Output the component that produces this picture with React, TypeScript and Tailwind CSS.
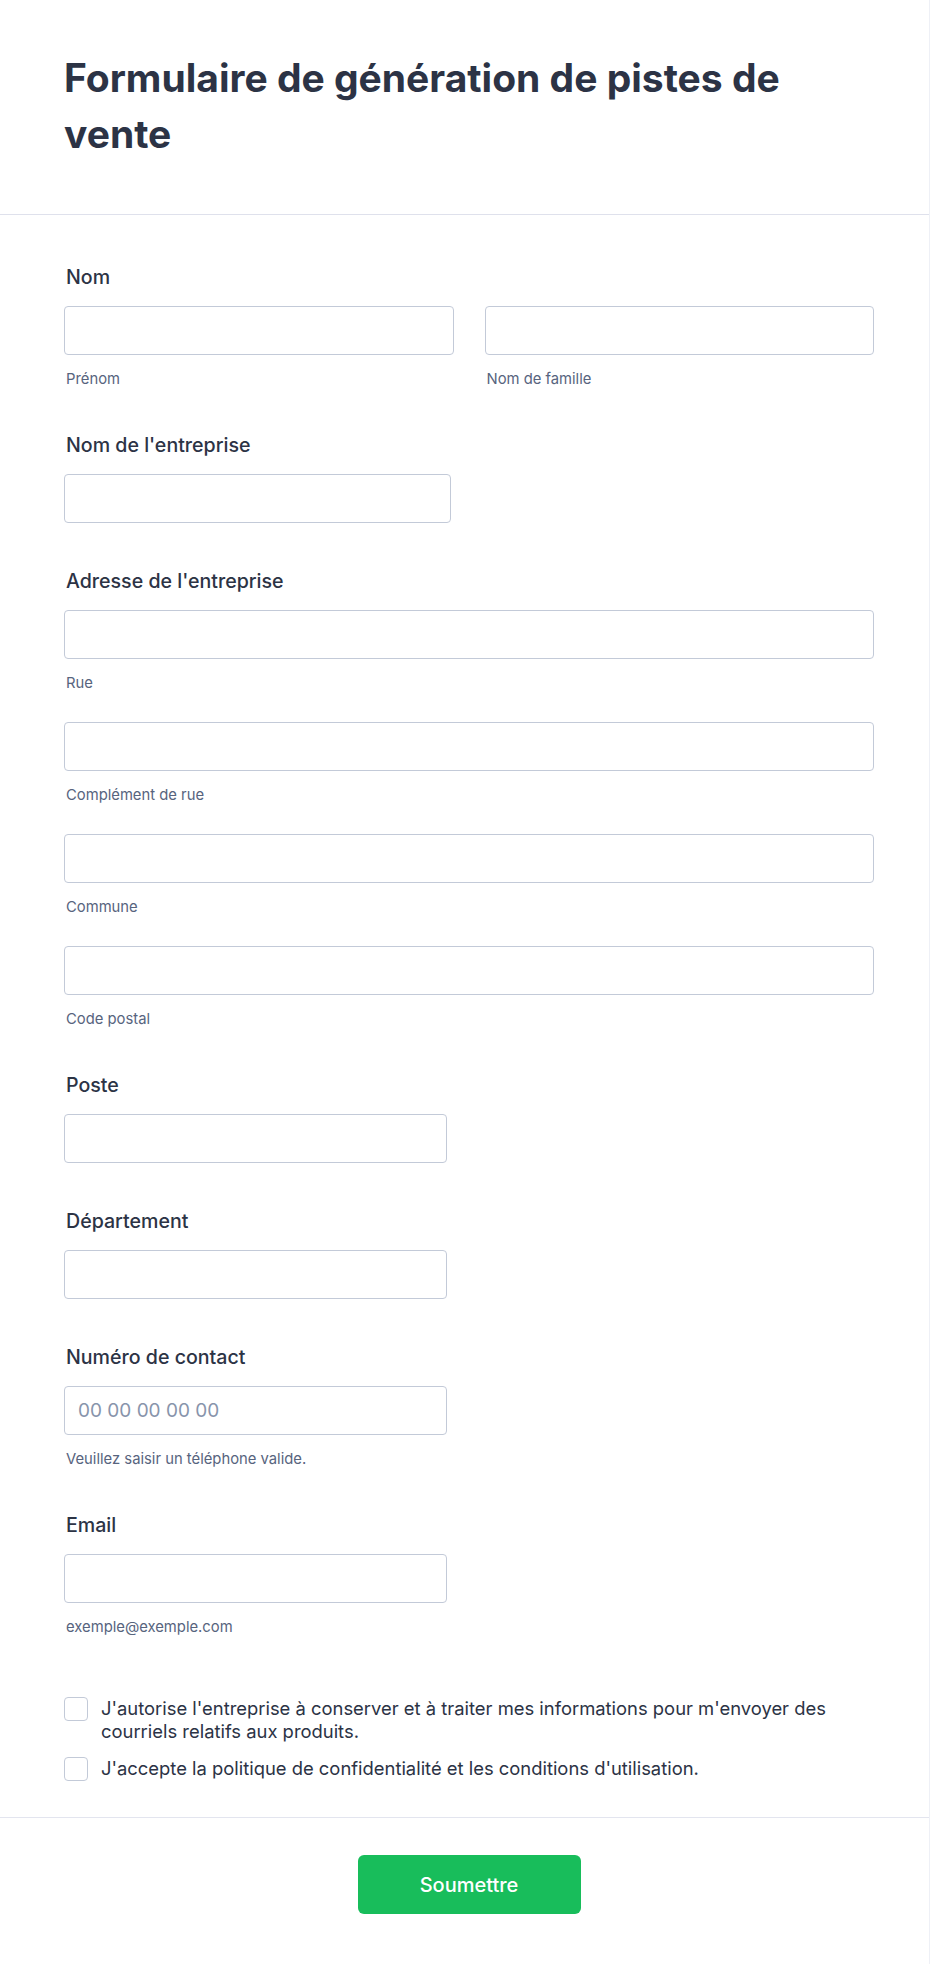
import React from "react";

const inputCls =
  "block h-[49px] w-full rounded-[4px] border border-[#c3cad8] bg-white px-[13px] text-[19px] text-[#2c3345] outline-none placeholder:text-[#8894ab]";

function Label({ children }: { children: React.ReactNode }) {
  return (
    <div className="pl-[2px] text-[19.6px] font-medium leading-[27px] text-[#2c3345]">
      {children}
    </div>
  );
}

function Sub({ children }: { children: React.ReactNode }) {
  return (
    <div className="mt-[14px] pl-[2px] text-[14.8px] leading-[20px] text-[#57647e]">
      {children}
    </div>
  );
}

function Checkbox() {
  return (
    <span className="block h-[24px] w-[24px] shrink-0 rounded-[4px] border border-[#c3cad8] bg-white" />
  );
}

export default function App() {
  return (
    <div className="min-h-screen border-r border-[#eef0f6] bg-white [font-family:Inter,'Noto_Sans',sans-serif] text-[#2c3345]">
      <header className="border-b border-[#dfe1ec] pb-[52px] pl-[64px] pr-[55px] pt-[50px]">
        <h1 className="text-[39px] font-bold leading-[56px] text-[#2c3345]">
          Formulaire de génération de pistes de vente
        </h1>
      </header>

      <main className="pl-[64px] pr-[55px] pt-[49px]">
        {/* Nom */}
        <section>
          <Label>Nom</Label>
          <div className="mt-[15px] flex gap-[31px]">
            <div className="w-[390px]">
              <input className={inputCls} />
              <Sub>Prénom</Sub>
            </div>
            <div className="w-[390px]">
              <input className={inputCls} />
              <Sub>Nom de famille</Sub>
            </div>
          </div>
        </section>

        {/* Entreprise */}
        <section className="mt-[43px]">
          <Label>Nom de l'entreprise</Label>
          <div className="mt-[15px] w-[387px]">
            <input className={inputCls} />
          </div>
        </section>

        {/* Adresse */}
        <section className="mt-[45px]">
          <Label>Adresse de l'entreprise</Label>
          <div className="mt-[15px]">
            <input className={inputCls} />
            <Sub>Rue</Sub>
          </div>
          <div className="mt-[29px]">
            <input className={inputCls} />
            <Sub>Complément de rue</Sub>
          </div>
          <div className="mt-[29px]">
            <input className={inputCls} />
            <Sub>Commune</Sub>
          </div>
          <div className="mt-[29px]">
            <input className={inputCls} />
            <Sub>Code postal</Sub>
          </div>
        </section>

        {/* Poste */}
        <section className="mt-[43px]">
          <Label>Poste</Label>
          <div className="mt-[15px] w-[383px]">
            <input className={inputCls} />
          </div>
        </section>

        {/* Département */}
        <section className="mt-[45px]">
          <Label>Département</Label>
          <div className="mt-[15px] w-[383px]">
            <input className={inputCls} />
          </div>
        </section>

        {/* Numéro */}
        <section className="mt-[45px]">
          <Label>Numéro de contact</Label>
          <div className="mt-[15px] w-[383px]">
            <input className={inputCls} placeholder="00 00 00 00 00" />
            <Sub>Veuillez saisir un téléphone valide.</Sub>
          </div>
        </section>

        {/* Email */}
        <section className="mt-[43px]">
          <Label>Email</Label>
          <div className="mt-[15px] w-[383px]">
            <input className={inputCls} />
            <Sub>exemple@exemple.com</Sub>
          </div>
        </section>

        {/* Checkboxes */}
        <section className="mt-[60px] flex flex-col gap-[14px] pb-[36px]">
          <label className="flex items-start gap-[13px]">
            <Checkbox />
            <span className="text-[18.4px] leading-[23px] text-[#2c3345]">
              J'autorise l'entreprise à conserver et à traiter mes informations pour m'envoyer des courriels relatifs aux produits.
            </span>
          </label>
          <label className="flex items-start gap-[13px]">
            <Checkbox />
            <span className="text-[18.4px] leading-[23px] text-[#2c3345]">
              J'accepte la politique de confidentialité et les conditions d'utilisation.
            </span>
          </label>
        </section>
      </main>

      <footer className="flex justify-center border-t border-[#e3e5ef] pb-[50px] pl-[64px] pr-[55px] pt-[37px]">
        <button className="flex h-[59px] w-[223px] items-center justify-center rounded-[6px] bg-[#18bd5b] text-[20px] font-medium text-white">
          Soumettre
        </button>
      </footer>
    </div>
  );
}
